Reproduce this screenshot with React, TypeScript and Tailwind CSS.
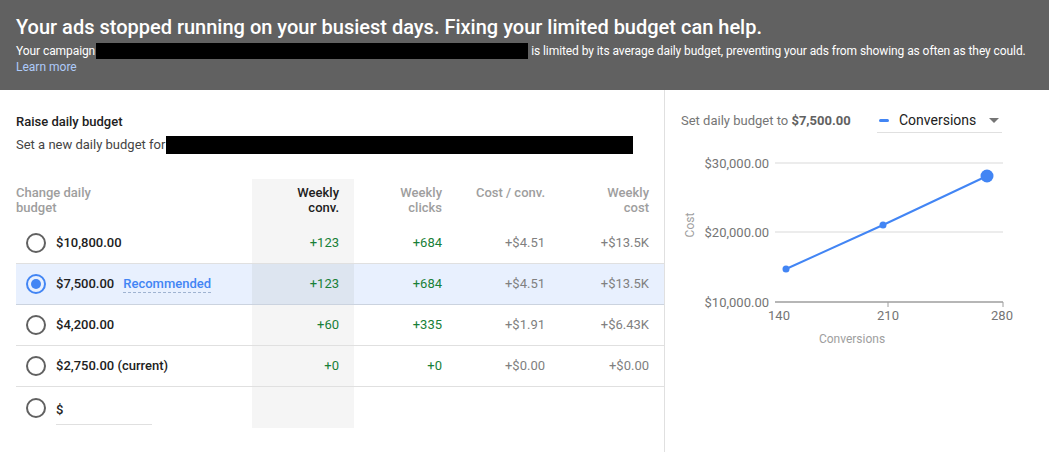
import React from "react";

type Row = {
  budget: string;
  recommended?: boolean;
  selected?: boolean;
  conv?: string;
  clicks?: string;
  costConv?: string;
  cost?: string;
  custom?: boolean;
};

const rows: Row[] = [
  { budget: "$10,800.00", conv: "+123", clicks: "+684", costConv: "+$4.51", cost: "+$13.5K" },
  { budget: "$7,500.00", recommended: true, selected: true, conv: "+123", clicks: "+684", costConv: "+$4.51", cost: "+$13.5K" },
  { budget: "$4,200.00", conv: "+60", clicks: "+335", costConv: "+$1.91", cost: "+$6.43K" },
  { budget: "$2,750.00 (current)", conv: "+0", clicks: "+0", costConv: "+$0.00", cost: "+$0.00" },
  { budget: "$", custom: true },
];

function Radio({ checked }: { checked?: boolean }) {
  return checked ? (
    <span className="w-5 h-5 rounded-full border-2 border-[#4285f4] flex items-center justify-center shrink-0">
      <span className="w-[10px] h-[10px] rounded-full bg-[#4285f4]" />
    </span>
  ) : (
    <span className="w-5 h-5 rounded-full border-2 border-[#616161] shrink-0" />
  );
}

function Chart() {
  return (
    <svg width="383" height="200" className="block" style={{ fontFamily: "Roboto, sans-serif" }}>
      <line x1="110" y1="13" x2="338" y2="13" stroke="#e6e6e6" strokeWidth="1.5" />
      <line x1="110" y1="82" x2="338" y2="82" stroke="#e6e6e6" strokeWidth="1.5" />
      <line x1="110" y1="152" x2="338" y2="152" stroke="#9e9e9e" strokeWidth="1.5" />
      <line x1="223" y1="152" x2="223" y2="157" stroke="#9e9e9e" strokeWidth="1" />
      <line x1="338" y1="152" x2="338" y2="157" stroke="#9e9e9e" strokeWidth="1" />
      <g fill="#757575" fontSize="13" textAnchor="end">
        <text x="104" y="18">$30,000.00</text>
        <text x="104" y="87">$20,000.00</text>
        <text x="104" y="157">$10,000.00</text>
      </g>
      <g fill="#757575" fontSize="13" textAnchor="middle">
        <text x="114" y="170">140</text>
        <text x="223" y="170">210</text>
        <text x="337" y="170">280</text>
      </g>
      <text x="187" y="193" fill="#9e9e9e" fontSize="12" textAnchor="middle">Conversions</text>
      <text x="0" y="0" fill="#9e9e9e" fontSize="12" textAnchor="middle" transform="translate(29 75) rotate(-90)">Cost</text>
      <polyline points="121,119 218,75 322,26" fill="none" stroke="#4285f4" strokeWidth="2" />
      <circle cx="121" cy="119" r="3.5" fill="#4285f4" />
      <circle cx="218" cy="75" r="3.5" fill="#4285f4" />
      <circle cx="322" cy="26" r="6.5" fill="#4285f4" />
    </svg>
  );
}

export default function App() {
  const headCell = "pr-[15px] pt-[6px] text-right leading-[15px] text-[13px] font-medium text-[#9e9e9e]";
  return (
    <div className="w-[1049px] h-[452px] bg-white overflow-hidden" style={{ fontFamily: "Roboto, 'Liberation Sans', sans-serif" }}>
      {/* banner */}
      <div className="h-[90px] bg-[#616161] px-4 pt-[14px] text-white">
        <h1 className="text-[20px] leading-[26px] font-medium">
          Your ads stopped running on your busiest days. Fixing your limited budget can help.
        </h1>
        <div className="mt-[3px] flex items-center whitespace-nowrap text-[12px] leading-[16px] tracking-[-0.08px]">
          <span>Your campaign</span>
          <span className="inline-block w-[432px] h-[16px] bg-black ml-px mr-[3px] shrink-0" />
          <span>is limited by its average daily budget, preventing your ads from showing as often as they could.</span>
        </div>
        <a className="block text-[12px] leading-[16px] text-[#aecbfa]">Learn more</a>
      </div>

      <div className="flex h-[362px]">
        {/* left panel */}
        <div className="w-[665px] pl-4 pt-6 border-r border-[#e0e0e0] shrink-0">
          <div className="text-[13px] leading-4 font-medium text-[#212121]">Raise daily budget</div>
          <div className="mt-[6px] flex items-center h-[18px] text-[13px] text-[#444]">
            <span>Set a new daily budget for</span>
            <span className="ml-px w-[467px] h-[18px] bg-black" />
          </div>

          <div className="mt-[25px] grid grid-cols-[236px_102px_103px_103px_104px]">
            {/* header */}
            <div className="h-[44px] pt-[6px] leading-[15px] text-[13px] font-medium text-[#9e9e9e]">
              Change daily
              <br />
              budget
            </div>
            <div className={headCell + " bg-[#f5f5f5] !text-[#212121]"}>
              Weekly
              <br />
              conv.
            </div>
            <div className={headCell}>
              Weekly
              <br />
              clicks
            </div>
            <div className={headCell}>Cost / conv.</div>
            <div className={headCell}>
              Weekly
              <br />
              cost
            </div>

            {rows.map((r, i) => {
              const last = i === rows.length - 1;
              const rowBg = r.selected ? "bg-[#e8f0fe]" : "";
              const border = last ? "" : r.selected ? "border-b border-[#cbd3df]" : "border-b border-[#e0e0e0]";
              const cell = `h-[41px] flex items-center justify-end pr-[15px] text-[13px] ${rowBg} ${border}`;
              return (
                <React.Fragment key={i}>
                  <div className={`h-[41px] flex items-center pl-[10px] gap-[10px] ${rowBg} ${border}`}>
                    <Radio checked={r.selected} />
                    {r.custom ? (
                      <div className="flex flex-col pt-[11px]">
                        <span className="text-[13px] font-medium text-[#212121] leading-4">$</span>
                        <span className="w-[96px] mt-[6px] border-b border-[#e0e0e0]" />
                      </div>
                    ) : (
                      <span className="text-[13px] font-medium text-[#212121]">
                        {r.budget}
                        {r.recommended && (
                          <span className="ml-[9px] text-[#4285f4] border-b border-dashed border-[#9fb3d1] pb-px">Recommended</span>
                        )}
                      </span>
                    )}
                  </div>
                  <div className={`${cell} text-[#188038] ${r.selected ? "!bg-[#dde5f0]" : "bg-[#f5f5f5]"}`}>{r.conv}</div>
                  <div className={`${cell} text-[#188038]`}>{r.clicks}</div>
                  <div className={`${cell} text-[#808080]`}>{r.costConv}</div>
                  <div className={`${cell} text-[#808080]`}>{r.cost}</div>
                </React.Fragment>
              );
            })}
          </div>
        </div>

        {/* right panel */}
        <div className="flex-1 pt-[18px]">
          <div className="flex items-start pl-4">
            <div className="text-[13px] leading-[25px] text-[#757575] w-[196px] whitespace-nowrap">
              Set daily budget to <span className="font-bold text-[#616161]">$7,500.00</span>
            </div>
            <div className="w-[125px] h-[25px] border-b border-[#e0e0e0] flex items-center pl-[2px]">
              <span className="w-[10px] h-[3px] rounded-full bg-[#4285f4]" />
              <span className="ml-[10px] text-[14px] text-[#212121]">Conversions</span>
              <span className="ml-auto mr-[3px] w-0 h-0 border-l-[5px] border-r-[5px] border-t-[5px] border-l-transparent border-r-transparent border-t-[#757575]" />
            </div>
          </div>
          <div className="mt-[17px]">
            <Chart />
          </div>
        </div>
      </div>
    </div>
  );
}
